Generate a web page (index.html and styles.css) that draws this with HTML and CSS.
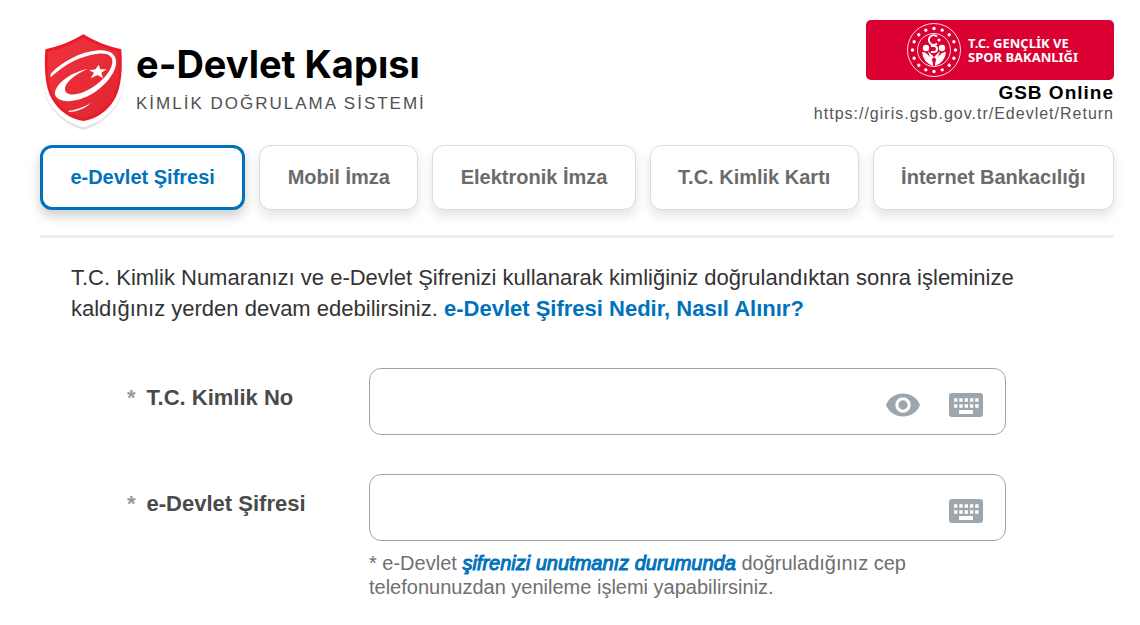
FILE: index.html
```html
<!DOCTYPE html>
<html lang="tr">
<head>
<meta charset="utf-8">
<meta name="viewport" content="width=device-width, initial-scale=1">
<title>e-Devlet Kapısı</title>
<link rel="stylesheet" href="styles.css">
</head>
<body>
<div class="page">
  <header class="header">
    <div class="brand">
      <svg class="shield" viewBox="30 42 264 291" aria-hidden="true">
        <defs>
          <linearGradient id="red" x1="0" y1="0" x2="1" y2="1">
            <stop offset="0" stop-color="#f0333f"/>
            <stop offset="1" stop-color="#e02630"/>
          </linearGradient>
        </defs>
        <path d="M38 180C40 262 100 314 160 330C220 314 280 262 282 180Z" fill="#e4e4e4"/>
        <path d="M36 150C34 256 98 306 160 321C222 306 286 256 284 150Z" fill="#fff"/>
        <path d="M160 43C124 65 86 80 46 88C42 150 46 200 64 234C86 274 122 298 160 303C198 298 234 274 256 234C274 200 278 150 274 88C234 80 196 65 160 43Z" fill="#ea1c2c"/>
        <path d="M160 53C124 74 90 87 54 95C51 150 54 196 71 229C92 266 124 288 160 293C196 288 228 266 249 229C266 196 269 150 266 95C230 87 196 74 160 53Z" fill="url(#red)"/>
        <path d="M62 161C98 124 151 96 204 91C240 88 262 103 258 133C253 171 205 221 150 238C112 249 78 243 75 222C73 198 111 160 174 146C131 165 102 190 105 210C108 228 139 227 169 212C212 191 243 157 247 128C249 106 232 98 203 101C155 107 103 132 62 172Z" fill="#fff"/>
        <path d="M206 134L211 148L230 148L214 158L219 175L203 165L182 175L192 158L178 151L197 148Z" fill="#fff"/>
        <path d="M114 273Q150 268 184 248Q155 274 119 276Z" fill="#fff"/>
      </svg>
      <div class="brand-text">
        <h1 class="brand-title">e-Devlet Kapısı</h1>
        <p class="brand-subtitle">KİMLİK DOĞRULAMA SİSTEMİ</p>
      </div>
    </div>
    <div class="client">
      <div class="client-logo">
        <svg class="emblem" viewBox="0 0 56 56" aria-hidden="true">
          <g fill="none" stroke="#fff">
            <circle cx="28" cy="28" r="26.5" stroke-width="1" opacity=".85"/>
            <circle cx="28" cy="28" r="16.5" stroke-width="1" opacity=".85"/>
            <circle cx="28" cy="28" r="21.5" stroke-width="3.4" stroke-linecap="round" stroke-dasharray="0 1" pathLength="16"/>
            <path d="M31 14.5A4.8 4.8 0 1 0 31 21.5" stroke-width="2"/>
          </g>
          <g fill="#fff">
            <circle cx="33" cy="18" r="1.5"/>
            <circle cx="20" cy="26" r="3.2"/>
            <circle cx="36" cy="26" r="3.2"/>
            <path d="M16 30Q20 30 23 34Q27 37 27 44Q17 40 16 30ZM40 30Q36 30 33 34Q29 37 29 44Q39 40 40 30Z"/>
            <path d="M25 23H28Q32 23 32 27Q32 31 28 31H25V29H28Q30 29 30 27Q30 25 28 25H25Z"/>
            <path d="M22 29L28 35L34 29L31 38L28 35L25 38Z"/>
          </g>
        </svg>
        <p class="client-logo-text">T.C. GENÇLİK VE<br>SPOR BAKANLIĞI</p>
      </div>
      <p class="client-name">GSB Online</p>
      <p class="client-url">https://giris.gsb.gov.tr/Edevlet/Return</p>
    </div>
  </header>

  <nav class="tabs" aria-label="Giriş yöntemi">
    <a class="tab tab-active" href="#sifre" aria-current="page">e-Devlet Şifresi</a>
    <a class="tab" href="#mobil">Mobil İmza</a>
    <a class="tab" href="#elektronik">Elektronik İmza</a>
    <a class="tab" href="#kart">T.C. Kimlik Kartı</a>
    <a class="tab" href="#banka">İnternet Bankacılığı</a>
  </nav>

  <main class="content" id="sifre">
    <p class="intro">T.C. Kimlik Numaranızı ve e-Devlet Şifrenizi kullanarak kimliğiniz doğrulandıktan sonra işleminize kaldığınız yerden devam edebilirsiniz. <a class="intro-link" href="#nedir">e-Devlet Şifresi Nedir, Nasıl Alınır?</a></p>

    <form class="form">
      <div class="row">
        <label class="label" for="tc"><span class="required">*</span>T.C. Kimlik No</label>
        <div class="field">
          <input class="input" id="tc" type="text" inputmode="numeric" autocomplete="off">
          <div class="tools">
            <button class="tool" type="button" aria-label="Göster">
              <svg class="icon" viewBox="0 0 36 26" aria-hidden="true"><path d="M1 13C4 5.500 10.500 1.500 18 1.500S32 5.500 35 13C32 20.500 25.500 24.500 18 24.500S4 20.500 1 13Z" fill="#9ea6ad"/><circle cx="18" cy="13" r="6.200" fill="#9ea6ad" stroke="#fff" stroke-width="3"/></svg>
            </button>
            <button class="tool" type="button" aria-label="Sanal klavye">
              <svg class="icon" viewBox="0 0 36 26" aria-hidden="true"><rect x="1" y="1" width="34" height="24" rx="3" fill="#9ea6ad"/><path d="M6 8H31M6 14H31" fill="none" stroke="#fff" stroke-width="3.500" stroke-dasharray="3.400 1.900"/><path d="M11 20H25" stroke="#fff" stroke-width="4"/></svg>
            </button>
          </div>
        </div>
      </div>
      <div class="row">
        <label class="label" for="pw"><span class="required">*</span>e-Devlet Şifresi</label>
        <div class="field">
          <input class="input" id="pw" type="password" autocomplete="off">
          <div class="tools">
            <button class="tool" type="button" aria-label="Sanal klavye">
              <svg class="icon" viewBox="0 0 36 26" aria-hidden="true"><rect x="1" y="1" width="34" height="24" rx="3" fill="#9ea6ad"/><path d="M6 8H31M6 14H31" fill="none" stroke="#fff" stroke-width="3.500" stroke-dasharray="3.400 1.900"/><path d="M11 20H25" stroke="#fff" stroke-width="4"/></svg>
            </button>
          </div>
          <p class="hint">* e-Devlet <a class="hint-link" href="#unuttum">şifrenizi unutmanız durumunda</a> doğruladığınız cep telefonunuzdan yenileme işlemi yapabilirsiniz.</p>
        </div>
      </div>
    </form>
  </main>
</div>
</body>
</html>
```

FILE: styles.css
```css
* {
  box-sizing: border-box;
}

body {
  margin: 0;
  background: #fff;
  color: #333;
  font-family: "Liberation Sans", Arial, sans-serif;
}

h1,
p {
  margin: 0;
}

a {
  text-decoration: none;
}

.page {
  padding: 20px 26px 24px 40px;
}

.header {
  display: flex;
  justify-content: space-between;
  align-items: flex-start;
}

.brand {
  display: flex;
  align-items: flex-start;
  gap: 8px;
  padding-top: 14px;
}

.shield {
  width: 88px;
  height: 97px;
}

.brand-text {
  padding-top: 8px;
}

.brand-title {
  color: #000;
  font: 700 38px/44px Inter, sans-serif;
}

.brand-subtitle {
  color: #505050;
  font-size: 17px;
  line-height: 36px;
  letter-spacing: 2px;
}

.client {
  display: flex;
  flex-direction: column;
  align-items: flex-end;
  letter-spacing: 1px;
}

.client-logo {
  display: flex;
  align-items: center;
  gap: 6px;
  width: 248px;
  height: 60px;
  padding-left: 40px;
  border-radius: 5px;
  background: #db0032;
}

.emblem {
  width: 56px;
  height: 56px;
}

.client-logo-text {
  color: #fff;
  font: 700 13px/14px "Noto Sans", sans-serif;
  letter-spacing: 0;
}

.client-name {
  color: #000;
  font-size: 19px;
  font-weight: 700;
  line-height: 25px;
}

.client-url {
  color: #555;
  font-size: 16px;
  line-height: 18px;
}

.tabs {
  display: flex;
  gap: 14px;
  margin-top: 14px;
  padding-bottom: 25px;
  border-bottom: 3px solid #ededed;
}

.tab {
  flex: 1 1 auto;
  padding: 18px 25px;
  border: 1px solid #dcdcdc;
  border-radius: 12px;
  background: #fff;
  box-shadow: 0 6px 12px rgba(0, 0, 0, 0.11);
  color: #6b6b6b;
  font-size: 20px;
  font-weight: 700;
  line-height: 27px;
  text-align: center;
}

.tab-active {
  padding: 16px 25px;
  border: 3px solid #0072bc;
  box-shadow: 0 6px 12px rgba(0, 0, 0, 0.2);
  color: #0072bc;
}

.content {
  padding: 24px 31px 0;
}

.intro {
  color: #333;
  font-size: 22px;
  line-height: 31px;
}

.intro-link {
  color: #0072bc;
  font-weight: 700;
}

.form {
  display: flex;
  flex-direction: column;
  gap: 39px;
  padding: 44px 77px 0 56px;
}

.row {
  display: grid;
  grid-template-columns: 242px 1fr;
}

.label {
  padding-top: 16px;
  color: #4a4a4a;
  font-size: 22px;
  font-weight: 700;
  line-height: 28px;
}

.required {
  margin-right: 11px;
  color: #999;
}

.field {
  position: relative;
}

.input {
  display: block;
  width: 100%;
  height: 67px;
  padding: 0 140px 0 20px;
  border: 1px solid #a3a3ad;
  border-radius: 12px;
  background: #fff;
  font: 22px "Liberation Sans", Arial, sans-serif;
}

.tools {
  position: absolute;
  top: 24px;
  right: 22px;
  display: flex;
  gap: 27px;
}

.tool {
  padding: 0;
  border: 0;
  background: none;
}

.icon {
  display: block;
  width: 36px;
  height: 26px;
}

.hint {
  padding-top: 10px;
  color: #707070;
  font-size: 20px;
  line-height: 24px;
}

.hint-link {
  color: #0072bc;
  font-style: italic;
  -webkit-text-stroke: 1px #0072bc;
}
```
